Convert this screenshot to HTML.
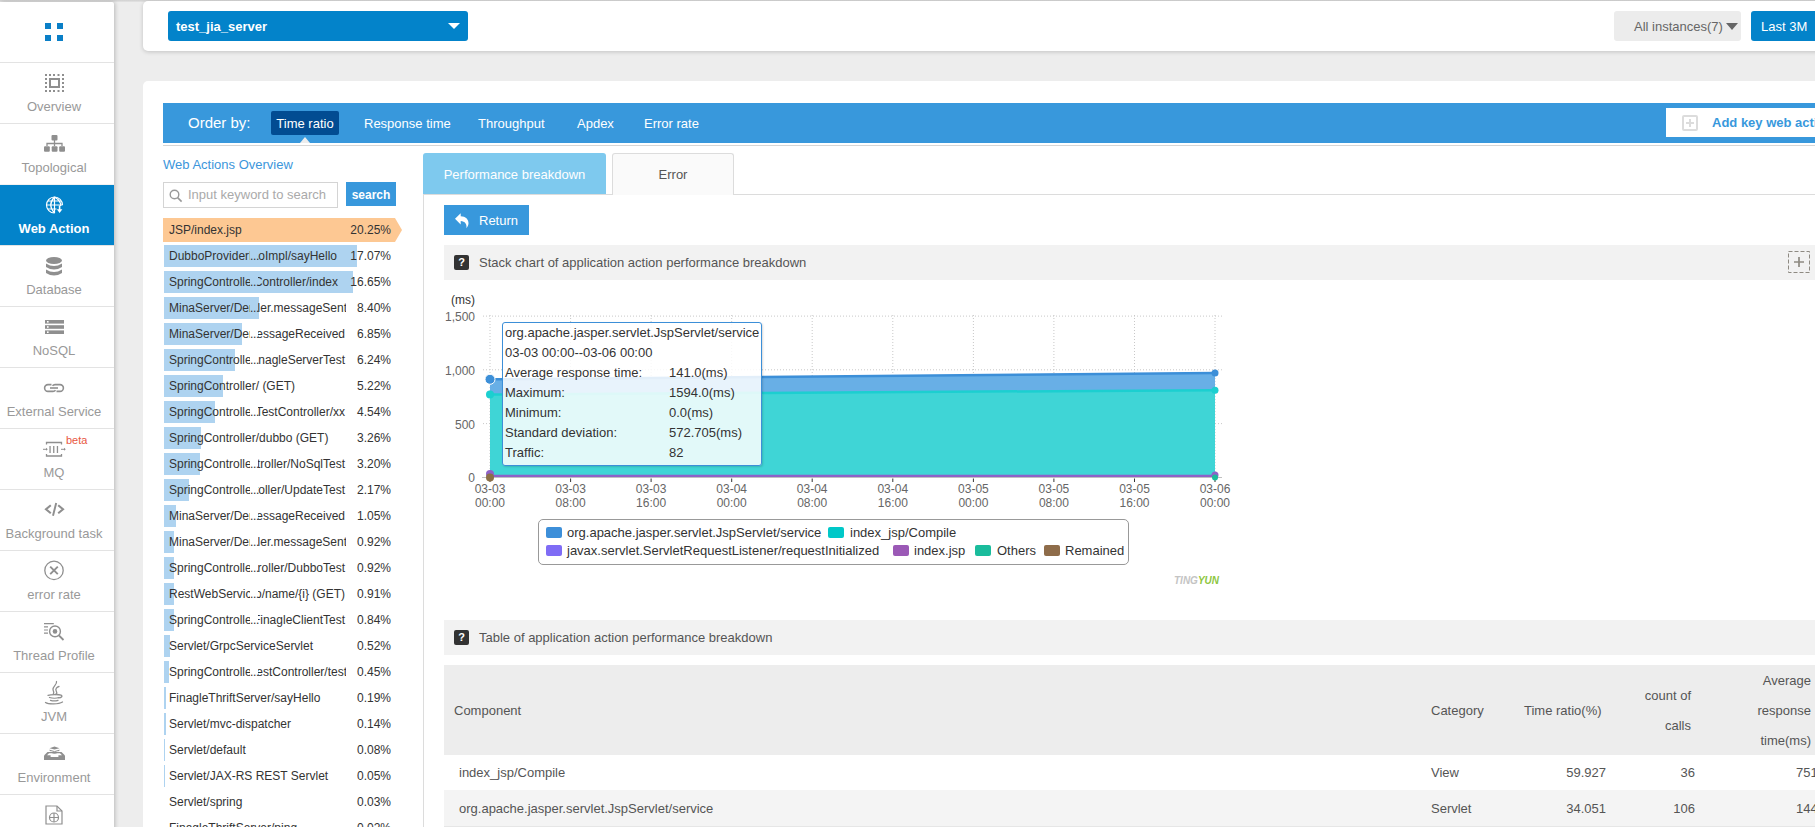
<!DOCTYPE html><html><head><meta charset="utf-8"><style>*{box-sizing:border-box;margin:0;padding:0}
html,body{width:1815px;height:827px;overflow:hidden;background:#ededed;font-family:"Liberation Sans",sans-serif;position:relative}
.abs{position:absolute}
.topshadow{position:absolute;left:0;top:0;width:1815px;height:2px;background:linear-gradient(#cfcfcf,#e4e4e4)}
#side{position:absolute;left:0;top:2px;width:114px;height:830px;background:#fff;box-shadow:1px 0 4px rgba(0,0,0,.22);border-top-right-radius:2px}
.nav{position:absolute;left:0;width:114px;height:61px;border-top:1px solid #e3e3e3;text-align:center;color:#999;font-size:13px}
.nav .lbl{position:absolute;left:0;width:108px;top:36px;line-height:16px;white-space:nowrap}
.nav.act{background:#0383ca;color:#fff;border-top-color:#f2f2f2;font-weight:bold}
#hdr{position:absolute;left:143px;top:1px;width:1690px;height:50px;background:#fff;border-radius:5px;box-shadow:0 1px 4px rgba(0,0,0,.18)}
#sel{position:absolute;left:168px;top:11px;width:300px;height:30px;background:#0383ca;border-radius:3px;color:#fff;font-weight:bold;font-size:13px;line-height:31px;padding-left:8px}
#sel:after{content:"";position:absolute;right:8px;top:12px;border-left:6px solid transparent;border-right:6px solid transparent;border-top:6px solid #fff}
#inst{position:absolute;left:1614px;top:11px;width:127px;height:30px;background:#ececec;border-radius:3px;color:#666;font-size:13px;line-height:31px;padding-left:20px;white-space:nowrap}
#inst:after{content:"";position:absolute;right:3px;top:12px;border-left:6px solid transparent;border-right:6px solid transparent;border-top:7px solid #666}
#last{position:absolute;left:1751px;top:11px;width:80px;height:30px;background:#0383ca;border-radius:3px;color:#fff;font-size:13px;line-height:31px;padding-left:10px;white-space:nowrap}
#main{position:absolute;left:143px;top:81px;width:1700px;height:800px;background:#fff;border-radius:5px}
#order{position:absolute;left:163px;top:103px;width:1660px;height:40px;background:#3898dc}
#orderline{position:absolute;left:163px;top:145px;width:1660px;height:1px;background:#d6d6d6}
.ob{position:absolute;top:104px;height:40px;line-height:40px;color:#fff;font-size:13px;white-space:nowrap}
#tr{position:absolute;left:271px;top:111px;width:68px;height:24px;background:#024c92;border-radius:2px;color:#fff;font-size:13px;line-height:26px;text-align:center}
#tri{position:absolute;left:300px;top:137px;border-left:5px solid transparent;border-right:5px solid transparent;border-bottom:6px solid #ededed}
#addkey{position:absolute;left:1666px;top:108px;width:160px;height:29px;background:#fff;color:#3898dc;font-weight:bold;font-size:13px;line-height:30px;padding-left:46px;white-space:nowrap}
#addicon{position:absolute;left:1682px;top:115px;width:16px;height:16px;border:2px solid #dcdcdc;border-radius:2px}
#addicon:before{content:"";position:absolute;left:5px;top:2px;width:2px;height:8px;background:#dcdcdc}
#addicon:after{content:"";position:absolute;left:2px;top:5px;width:8px;height:2px;background:#dcdcdc}
#srch{position:absolute;left:163px;top:182px;width:175px;height:26px;border:1px solid #d4d4d4;background:#fff}
#srch span{position:absolute;left:24px;top:4px;font-size:13px;line-height:16px;color:#aaa;white-space:nowrap}
#sbtn{position:absolute;left:346px;top:182px;width:50px;height:24px;background:#3898dc;color:#fff;font-size:12px;font-weight:bold;line-height:27px;text-align:center}
.lt{position:absolute;left:169px;font-size:12px;line-height:16px;color:#333;white-space:nowrap}
.tl{position:absolute;left:258px;width:88px;height:16px;overflow:hidden}
.tl span{position:absolute;right:0;top:0;font-size:12px;line-height:16px;color:#333;white-space:nowrap}
.lp{position:absolute;left:330px;width:61px;text-align:right;font-size:12px;line-height:16px;color:#333}
#tab1{position:absolute;left:423px;top:153px;width:183px;height:41px;background:#7ec9ee;border-radius:3px 3px 0 0;color:#fff;font-size:13px;line-height:43px;text-align:center}
#tab2{position:absolute;left:612px;top:153px;width:122px;height:42px;background:#fafafa;border:1px solid #dcdcdc;border-bottom:none;border-radius:3px 3px 0 0;color:#555;font-size:13px;line-height:42px;text-align:center}
#pane{position:absolute;left:423px;top:194px;width:1500px;height:700px;border-left:1px solid #dcdcdc;border-top:1px solid #dcdcdc}
#ret{position:absolute;left:444px;top:205px;width:85px;height:30px;background:#3898dc;color:#fff;font-size:13px;line-height:32px;padding-left:35px}
.tbar{position:absolute;left:444px;width:1400px;height:35px;background:#f2f2f2;color:#555;font-size:13px;line-height:36px;padding-left:35px;white-space:nowrap}
.q{position:absolute;left:10px;top:10px;width:15px;height:15px;background:#333;border-radius:2px;color:#fff;font-size:11px;font-weight:bold;line-height:15px;text-align:center}
.th{position:absolute;color:#555;font-size:13px;line-height:30px;white-space:nowrap}
.td{position:absolute;color:#555;font-size:13px;line-height:18px;white-space:nowrap}
</style></head><body><div class="topshadow"></div>
<div id="side"></div>
<div class="nav" style="top:62px"><div class="lbl">Overview</div></div>
<div class="nav" style="top:123px"><div class="lbl">Topological</div></div>
<div class="nav act" style="top:184px"><div class="lbl">Web Action</div></div>
<div class="nav" style="top:245px"><div class="lbl">Database</div></div>
<div class="nav" style="top:306px"><div class="lbl">NoSQL</div></div>
<div class="nav" style="top:367px"><div class="lbl">External Service</div></div>
<div class="nav" style="top:428px"><div class="lbl">MQ</div></div>
<div class="nav" style="top:489px"><div class="lbl">Background task</div></div>
<div class="nav" style="top:550px"><div class="lbl">error rate</div></div>
<div class="nav" style="top:611px"><div class="lbl">Thread Profile</div></div>
<div class="nav" style="top:672px"><div class="lbl">JVM</div></div>
<div class="nav" style="top:733px"><div class="lbl">Environment</div></div>
<div class="nav" style="top:794px"><div class="lbl"></div></div>
<svg class="abs" style="left:0;top:0" width="120" height="827"><rect x="45" y="23" width="6" height="6" fill="#0a7fc7"/><rect x="45" y="35" width="6" height="6" fill="#0a7fc7"/><rect x="57" y="23" width="6" height="6" fill="#0a7fc7"/><rect x="57" y="35" width="6" height="6" fill="#0a7fc7"/><rect x="45" y="74" width="2" height="2" fill="#8f8f8f"/><rect x="45" y="90" width="2" height="2" fill="#8f8f8f"/><rect x="49" y="74" width="2" height="2" fill="#8f8f8f"/><rect x="49" y="90" width="2" height="2" fill="#8f8f8f"/><rect x="53" y="74" width="2" height="2" fill="#8f8f8f"/><rect x="53" y="90" width="2" height="2" fill="#8f8f8f"/><rect x="57.5" y="74" width="2" height="2" fill="#8f8f8f"/><rect x="57.5" y="90" width="2" height="2" fill="#8f8f8f"/><rect x="62" y="74" width="2" height="2" fill="#8f8f8f"/><rect x="62" y="90" width="2" height="2" fill="#8f8f8f"/><rect x="45" y="78" width="2" height="2" fill="#8f8f8f"/><rect x="62" y="78" width="2" height="2" fill="#8f8f8f"/><rect x="45" y="82" width="2" height="2" fill="#8f8f8f"/><rect x="62" y="82" width="2" height="2" fill="#8f8f8f"/><rect x="45" y="86" width="2" height="2" fill="#8f8f8f"/><rect x="62" y="86" width="2" height="2" fill="#8f8f8f"/><rect x="50" y="79" width="9" height="8" fill="none" stroke="#8f8f8f" stroke-width="2"/><rect x="51.5" y="135" width="6" height="5.5" rx="1" fill="#8f8f8f"/><path d="M54.5 140v6 M47 146v-2.5h15v2.5" fill="none" stroke="#8f8f8f" stroke-width="1.3"/><rect x="44" y="146.2" width="5.8" height="5.6" rx="1" fill="#8f8f8f"/><rect x="51.7" y="146.2" width="5.8" height="5.6" rx="1" fill="#8f8f8f"/><rect x="59.2" y="146.2" width="5.8" height="5.6" rx="1" fill="#8f8f8f"/><g fill="none" stroke="#fff" stroke-width="1.2"><path d="M54.5 213A8 8 0 1 1 62.5 205"/><path d="M54.5 197V213 M48 201H61 M46.5 205H62.5 M47.5 209H56.5 M54.5 197Q47 205 54.5 213 M54.5 197Q61.5 201 60.5 206"/></g><path d="M59.6 205.5V210" stroke="#fff" stroke-width="1.6"/><path d="M56.8 209.2L59.6 213L62.4 209.2z" fill="#fff"/><ellipse cx="54" cy="260.5" rx="8" ry="3.5" fill="#8f8f8f"/><path d="M46 263.5 q8 5 16 0 v3.5 q-8 5 -16 0z" fill="#8f8f8f"/><path d="M46 269.5 q8 5 16 0 v3.5 q-8 5 -16 0z" fill="#8f8f8f"/><rect x="45" y="320" width="19" height="3.6" fill="#8f8f8f"/><rect x="47" y="321" width="1.6" height="1.6" fill="#fff"/><rect x="45" y="325.2" width="19" height="3.6" fill="#8f8f8f"/><rect x="47" y="326.2" width="1.6" height="1.6" fill="#fff"/><rect x="45" y="330.4" width="19" height="3.6" fill="#8f8f8f"/><rect x="47" y="331.4" width="1.6" height="1.6" fill="#fff"/><g fill="none" stroke="#8f8f8f" stroke-width="1.6"><path d="M51.5 384.6h-3.5a3.4 3.4 0 0 0 0 6.8h5a3.4 3.4 0 0 0 2.5-1.2"/><path d="M56.5 391.4h3.5a3.4 3.4 0 0 0 0-6.8h-5a3.4 3.4 0 0 0-2.5 1.2"/><path d="M50 388h8"/></g><g fill="none" stroke="#8f8f8f" stroke-width="1.3"><path d="M46.5 444.5v-2h15v2 M46.5 454v2h15v-2"/></g><rect x="49.4" y="446" width="1.3" height="7" fill="#8f8f8f"/><rect x="53.1" y="446" width="1.3" height="7" fill="#8f8f8f"/><rect x="56.8" y="446" width="1.3" height="7" fill="#8f8f8f"/><path d="M43 449.3h4 M61 449.3h4" stroke="#8f8f8f" stroke-width="1"/><path d="M46 447.8l1.8 1.5-1.8 1.5z M64 447.8l1.8 1.5-1.8 1.5z" fill="#8f8f8f"/><path d="M50.8 505.2L46 509.2L50.8 513.2 M58.2 505.2L63 509.2L58.2 513.2" fill="none" stroke="#8f8f8f" stroke-width="2.1"/><path d="M56.2 503L53 515.8" stroke="#8f8f8f" stroke-width="1.9"/><circle cx="54" cy="570.4" r="9.2" fill="none" stroke="#8f8f8f" stroke-width="1.3"/><path d="M50.2 566.6l7.6 7.6 M57.8 566.6l-7.6 7.6" stroke="#8f8f8f" stroke-width="1.9"/><g stroke="#8f8f8f" fill="none"><path d="M44 623.6h9.8 M44 626.9h4 M44 630h4 M44 633.2h4" stroke-width="1.2"/><circle cx="55" cy="631.4" r="5.4" stroke-width="1.4"/><path d="M59 635.5l4.5 4.5" stroke-width="1.8"/></g><circle cx="55" cy="631.4" r="2.3" fill="#8f8f8f"/><g fill="none" stroke="#8f8f8f" stroke-width="1.3" stroke-linecap="round"><path d="M56.5 681.5c1 3-4 5-3.5 8s1.5 2.5 0.3 4.5"/><path d="M59 686.5c-2 0.5-4 2.2-2.8 4.5s0.5 3 -0.8 3.5"/><path d="M48 695.3c3-1 11-1 13-0.2c2 0.8 0.5 2.6-2.2 2.8"/><path d="M49.5 697.5c2.5 0.8 7.5 0.8 9.5 0"/><path d="M50.5 700.3c2 0.7 5.5 0.7 7.5 0"/><path d="M45.5 702.5c3 2 13 2 17-0.5"/></g><path d="M44 755.5L47.5 752H61.5L65 755.5V760H44z" fill="#8f8f8f"/><path d="M49 753.2H60L62 755.2H58.4V757.1H50.6V755.2H47z" fill="#fff"/><path d="M49.5 748.2L54.5 746.6L59.5 748.2L54.5 749.6z" fill="#8f8f8f"/><path d="M49.5 750.2L54.5 751.6L59.5 750.2" fill="none" stroke="#8f8f8f" stroke-width="1"/><path d="M50.5 752.2L54.5 753.4L58.5 752.2" fill="none" stroke="#8f8f8f" stroke-width="0.9"/><g fill="none" stroke="#8f8f8f" stroke-width="1.2"><path d="M46 806h11l5 5v13h-16z"/><path d="M57 806v5h5"/><circle cx="54" cy="817.5" r="4.5"/><path d="M54 813v9 M49.5 817.5h9"/></g></svg>
<div class="abs" style="left:66px;top:433px;color:#e8573f;font-size:11px;line-height:14px">beta</div>
<div id="hdr"></div>
<div id="sel">test_jia_server</div>
<div id="inst">All instances(7)</div>
<div id="last">Last 3M</div>
<div id="main"></div>
<div id="order"></div>
<div id="orderline"></div>
<div class="ob" style="left:188px;top:103px;font-size:15px">Order by:</div>
<div id="tr">Time ratio</div>
<div id="tri"></div>
<div class="ob" style="left:364px">Response time</div>
<div class="ob" style="left:478px">Throughput</div>
<div class="ob" style="left:577px">Apdex</div>
<div class="ob" style="left:644px">Error rate</div>
<div id="addkey">Add key web action</div>
<div id="addicon"></div>
<div class="abs" style="left:163px;top:157px;color:#3c96db;font-size:13px;line-height:16px;white-space:nowrap">Web Actions Overview</div>
<div id="srch"><svg width="14" height="14" style="position:absolute;left:5px;top:6px"><circle cx="5.5" cy="5.5" r="4.3" fill="none" stroke="#999" stroke-width="1.4"/><path d="M8.6 8.6l4 4" stroke="#999" stroke-width="1.6"/></svg><span>Input keyword to search</span></div>
<div id="sbtn">search</div>
<div class="abs" style="left:163px;top:218px;width:232px;height:24px;background:#fdc893"></div>
<div class="abs" style="left:395px;top:218px;border-top:12px solid transparent;border-bottom:12px solid transparent;border-left:7px solid #fdc893;width:0;height:0"></div>
<div class="lt" style="top:222px">JSP/index.jsp</div>
<div class="lp" style="top:222px">20.25%</div>
<div class="abs" style="left:164px;top:245px;width:193.4px;height:22px;background:#aed3f0"></div>
<div class="lt" style="top:248px;width:81px;overflow:hidden">DubboProviderDemoImpl</div>
<div class="lt" style="top:248px;left:250px;letter-spacing:-0.3px">...</div>
<div class="tl" style="top:248px"><span style="right:9px">DemoImpl/sayHello</span></div>
<div class="lp" style="top:248px">17.07%</div>
<div class="abs" style="left:164px;top:271px;width:188.6px;height:22px;background:#aed3f0"></div>
<div class="lt" style="top:274px;width:81px;overflow:hidden">SpringControllerTestController</div>
<div class="lt" style="top:274px;left:250px;letter-spacing:-0.3px">...</div>
<div class="tl" style="top:274px"><span style="right:8px">TestController/index</span></div>
<div class="lp" style="top:274px">16.65%</div>
<div class="abs" style="left:164px;top:297px;width:95.2px;height:22px;background:#aed3f0"></div>
<div class="lt" style="top:300px;width:81px;overflow:hidden">MinaServer/DemoServerHandler</div>
<div class="lt" style="top:300px;left:250px;letter-spacing:-0.3px">...</div>
<div class="tl" style="top:300px"><span style="right:-1px">Handler.messageSent</span></div>
<div class="lp" style="top:300px">8.40%</div>
<div class="abs" style="left:164px;top:323px;width:77.6px;height:22px;background:#aed3f0"></div>
<div class="lt" style="top:326px;width:81px;overflow:hidden">MinaServer/DemoServerHandler</div>
<div class="lt" style="top:326px;left:250px;letter-spacing:-0.3px">...</div>
<div class="tl" style="top:326px"><span style="right:1px">messageReceived</span></div>
<div class="lp" style="top:326px">6.85%</div>
<div class="abs" style="left:164px;top:349px;width:70.7px;height:22px;background:#aed3f0"></div>
<div class="lt" style="top:352px;width:81px;overflow:hidden">SpringControllerTestController</div>
<div class="lt" style="top:352px;left:250px;letter-spacing:-0.3px">...</div>
<div class="tl" style="top:352px"><span style="right:1px">FinagleServerTest</span></div>
<div class="lp" style="top:352px">6.24%</div>
<div class="abs" style="left:164px;top:375px;width:59.1px;height:22px;background:#aed3f0"></div>
<div class="lt" style="top:378px">SpringController/ (GET)</div>
<div class="lp" style="top:378px">5.22%</div>
<div class="abs" style="left:164px;top:401px;width:51.4px;height:22px;background:#aed3f0"></div>
<div class="lt" style="top:404px;width:81px;overflow:hidden">SpringControllerTestController</div>
<div class="lt" style="top:404px;left:250px;letter-spacing:-0.3px">...</div>
<div class="tl" style="top:404px"><span style="right:1px">TestController/xx</span></div>
<div class="lp" style="top:404px">4.54%</div>
<div class="abs" style="left:164px;top:427px;width:36.9px;height:22px;background:#aed3f0"></div>
<div class="lt" style="top:430px">SpringController/dubbo (GET)</div>
<div class="lp" style="top:430px">3.26%</div>
<div class="abs" style="left:164px;top:453px;width:36.3px;height:22px;background:#aed3f0"></div>
<div class="lt" style="top:456px;width:81px;overflow:hidden">SpringControllerTestController</div>
<div class="lt" style="top:456px;left:250px;letter-spacing:-0.3px">...</div>
<div class="tl" style="top:456px"><span style="right:1px">Controller/NoSqlTest</span></div>
<div class="lp" style="top:456px">3.20%</div>
<div class="abs" style="left:164px;top:479px;width:24.6px;height:22px;background:#aed3f0"></div>
<div class="lt" style="top:482px;width:81px;overflow:hidden">SpringControllerTestController</div>
<div class="lt" style="top:482px;left:250px;letter-spacing:-0.3px">...</div>
<div class="tl" style="top:482px"><span style="right:1px">Controller/UpdateTest</span></div>
<div class="lp" style="top:482px">2.17%</div>
<div class="abs" style="left:164px;top:505px;width:11.9px;height:22px;background:#aed3f0"></div>
<div class="lt" style="top:508px;width:81px;overflow:hidden">MinaServer/DemoServerHandler</div>
<div class="lt" style="top:508px;left:250px;letter-spacing:-0.3px">...</div>
<div class="tl" style="top:508px"><span style="right:1px">messageReceived</span></div>
<div class="lp" style="top:508px">1.05%</div>
<div class="abs" style="left:164px;top:531px;width:10.4px;height:22px;background:#aed3f0"></div>
<div class="lt" style="top:534px;width:81px;overflow:hidden">MinaServer/DemoServerHandler</div>
<div class="lt" style="top:534px;left:250px;letter-spacing:-0.3px">...</div>
<div class="tl" style="top:534px"><span style="right:-1px">Handler.messageSent</span></div>
<div class="lp" style="top:534px">0.92%</div>
<div class="abs" style="left:164px;top:557px;width:10.4px;height:22px;background:#aed3f0"></div>
<div class="lt" style="top:560px;width:81px;overflow:hidden">SpringControllerTestController</div>
<div class="lt" style="top:560px;left:250px;letter-spacing:-0.3px">...</div>
<div class="tl" style="top:560px"><span style="right:1px">Controller/DubboTest</span></div>
<div class="lp" style="top:560px">0.92%</div>
<div class="abs" style="left:164px;top:583px;width:10.3px;height:22px;background:#aed3f0"></div>
<div class="lt" style="top:586px;width:81px;overflow:hidden">RestWebService/hello</div>
<div class="lt" style="top:586px;left:250px;letter-spacing:-0.3px">...</div>
<div class="tl" style="top:586px"><span style="right:1px">hello/name/{i} (GET)</span></div>
<div class="lp" style="top:586px">0.91%</div>
<div class="abs" style="left:164px;top:609px;width:9.5px;height:22px;background:#aed3f0"></div>
<div class="lt" style="top:612px;width:81px;overflow:hidden">SpringControllerTestController</div>
<div class="lt" style="top:612px;left:250px;letter-spacing:-0.3px">...</div>
<div class="tl" style="top:612px"><span style="right:1px">FinagleClientTest</span></div>
<div class="lp" style="top:612px">0.84%</div>
<div class="abs" style="left:164px;top:635px;width:5.9px;height:22px;background:#aed3f0"></div>
<div class="lt" style="top:638px">Servlet/GrpcServiceServlet</div>
<div class="lp" style="top:638px">0.52%</div>
<div class="abs" style="left:164px;top:661px;width:5.1px;height:22px;background:#aed3f0"></div>
<div class="lt" style="top:664px;width:81px;overflow:hidden">SpringControllerTestController</div>
<div class="lt" style="top:664px;left:250px;letter-spacing:-0.3px">...</div>
<div class="tl" style="top:664px"><span style="right:-1px">TestController/test</span></div>
<div class="lp" style="top:664px">0.45%</div>
<div class="abs" style="left:164px;top:687px;width:2.2px;height:22px;background:#aed3f0"></div>
<div class="lt" style="top:690px">FinagleThriftServer/sayHello</div>
<div class="lp" style="top:690px">0.19%</div>
<div class="abs" style="left:164px;top:713px;width:1.6px;height:22px;background:#aed3f0"></div>
<div class="lt" style="top:716px">Servlet/mvc-dispatcher</div>
<div class="lp" style="top:716px">0.14%</div>
<div class="abs" style="left:164px;top:739px;width:0.9px;height:22px;background:#aed3f0"></div>
<div class="lt" style="top:742px">Servlet/default</div>
<div class="lp" style="top:742px">0.08%</div>
<div class="abs" style="left:164px;top:765px;width:0.6px;height:22px;background:#aed3f0"></div>
<div class="lt" style="top:768px">Servlet/JAX-RS REST Servlet</div>
<div class="lp" style="top:768px">0.05%</div>
<div class="lt" style="top:794px">Servlet/spring</div>
<div class="lp" style="top:794px">0.03%</div>
<div class="lt" style="top:820px">FinagleThriftServer/ping</div>
<div class="lp" style="top:820px">0.02%</div>
<div id="pane"></div>
<div id="tab1">Performance breakdown</div>
<div id="tab2">Error</div>
<div id="ret"><svg width="16" height="18" style="position:absolute;left:11px;top:7px"><path d="M0 6.7L5.7 1.2V4.3C10.5 4.3 13.8 7.5 13.5 11.5C13.3 13.5 12.3 15 11.4 16.2C12.2 12.2 10 9.2 5.7 9V12.5Z" fill="#fff"/></svg>Return</div>
<div class="tbar" style="top:245px"><div class="q">?</div>Stack chart of application action performance breakdown</div>
<svg class="abs" style="left:1787px;top:250px" width="24" height="24"><rect x="1.5" y="1.5" width="21" height="21" fill="none" stroke="#8e8a82" stroke-width="1" stroke-dasharray="4 2"/><path d="M12 7V17 M7 12H17" stroke="#8e8a82" stroke-width="1.7"/></svg>
<div class="tbar" style="top:620px"><div class="q">?</div>Table of application action performance breakdown</div>
<svg class="abs" style="left:0;top:0" width="1815" height="827"><path d="M483 423.6H1222" stroke="#c8c8c8" stroke-width="1" stroke-dasharray="1 2"/><path d="M483 369.8H1222" stroke="#c8c8c8" stroke-width="1" stroke-dasharray="1 2"/><path d="M483 316.1H1222" stroke="#c8c8c8" stroke-width="1" stroke-dasharray="1 2"/><path d="M490.0 315V477" stroke="#c8c8c8" stroke-width="1" stroke-dasharray="1 2"/><path d="M570.6 315V477" stroke="#c8c8c8" stroke-width="1" stroke-dasharray="1 2"/><path d="M651.1 315V477" stroke="#c8c8c8" stroke-width="1" stroke-dasharray="1 2"/><path d="M731.7 315V477" stroke="#c8c8c8" stroke-width="1" stroke-dasharray="1 2"/><path d="M812.2 315V477" stroke="#c8c8c8" stroke-width="1" stroke-dasharray="1 2"/><path d="M892.8 315V477" stroke="#c8c8c8" stroke-width="1" stroke-dasharray="1 2"/><path d="M973.4 315V477" stroke="#c8c8c8" stroke-width="1" stroke-dasharray="1 2"/><path d="M1053.9 315V477" stroke="#c8c8c8" stroke-width="1" stroke-dasharray="1 2"/><path d="M1134.5 315V477" stroke="#c8c8c8" stroke-width="1" stroke-dasharray="1 2"/><path d="M1215.0 315V477" stroke="#c8c8c8" stroke-width="1" stroke-dasharray="1 2"/><path d="M490.0 379.3L1215.0 373.0L1215.0 390.2L490.0 394.5z" fill="#68afe6"/><path d="M490.0 394.5L1215.0 390.2L1215.0 476.2L490.0 476.2z" fill="#3fd5d6"/><path d="M490.0 379.3L1215.0 373.0" stroke="#3c8fd8" stroke-width="2.5" fill="none"/><path d="M490.0 394.5L1215.0 390.2" stroke="#1ccfd0" stroke-width="2.5" fill="none"/><path d="M490.0 476H1215.0" stroke="#8e62c8" stroke-width="2.5"/><path d="M482 477.5H1222" stroke="#c0c0c0" stroke-width="1"/><path d="M490.0 478.5V482" stroke="#333" stroke-width="1"/><path d="M570.6 478.5V482" stroke="#333" stroke-width="1"/><path d="M651.1 478.5V482" stroke="#333" stroke-width="1"/><path d="M731.7 478.5V482" stroke="#333" stroke-width="1"/><path d="M812.2 478.5V482" stroke="#333" stroke-width="1"/><path d="M892.8 478.5V482" stroke="#333" stroke-width="1"/><path d="M973.4 478.5V482" stroke="#333" stroke-width="1"/><path d="M1053.9 478.5V482" stroke="#333" stroke-width="1"/><path d="M1134.5 478.5V482" stroke="#333" stroke-width="1"/><path d="M1215.0 478.5V482" stroke="#333" stroke-width="1"/><circle cx="490.0" cy="379.3" r="5" fill="#3c8fd8" stroke="#fff" stroke-width="1"/><circle cx="490.0" cy="394.5" r="4" fill="#1ccfd0"/><circle cx="490.0" cy="474" r="4" fill="#8e62c8"/><circle cx="490.0" cy="477.5" r="4" fill="#8b6f47"/><circle cx="1215.0" cy="373.0" r="3.5" fill="#3c8fd8"/><circle cx="1215.0" cy="390.2" r="3.5" fill="#1ccfd0"/><circle cx="1215.0" cy="475" r="3.5" fill="#8e62c8"/><circle cx="1215.0" cy="477.5" r="3" fill="#1abc9c"/></svg>
<div class="abs" style="left:451px;top:293px;font-size:12px;line-height:15px;color:#333">(ms)</div>
<div class="abs" style="left:424px;width:51px;text-align:right;top:310px;font-size:12px;line-height:15px;color:#666">1,500</div>
<div class="abs" style="left:424px;width:51px;text-align:right;top:364px;font-size:12px;line-height:15px;color:#666">1,000</div>
<div class="abs" style="left:424px;width:51px;text-align:right;top:418px;font-size:12px;line-height:15px;color:#666">500</div>
<div class="abs" style="left:424px;width:51px;text-align:right;top:471px;font-size:12px;line-height:15px;color:#666">0</div>
<div class="abs" style="left:460.0px;width:60px;text-align:center;top:482px;font-size:12px;line-height:14px;color:#666">03-03<br>00:00</div>
<div class="abs" style="left:540.6px;width:60px;text-align:center;top:482px;font-size:12px;line-height:14px;color:#666">03-03<br>08:00</div>
<div class="abs" style="left:621.1px;width:60px;text-align:center;top:482px;font-size:12px;line-height:14px;color:#666">03-03<br>16:00</div>
<div class="abs" style="left:701.7px;width:60px;text-align:center;top:482px;font-size:12px;line-height:14px;color:#666">03-04<br>00:00</div>
<div class="abs" style="left:782.2px;width:60px;text-align:center;top:482px;font-size:12px;line-height:14px;color:#666">03-04<br>08:00</div>
<div class="abs" style="left:862.8px;width:60px;text-align:center;top:482px;font-size:12px;line-height:14px;color:#666">03-04<br>16:00</div>
<div class="abs" style="left:943.4px;width:60px;text-align:center;top:482px;font-size:12px;line-height:14px;color:#666">03-05<br>00:00</div>
<div class="abs" style="left:1023.9px;width:60px;text-align:center;top:482px;font-size:12px;line-height:14px;color:#666">03-05<br>08:00</div>
<div class="abs" style="left:1104.5px;width:60px;text-align:center;top:482px;font-size:12px;line-height:14px;color:#666">03-05<br>16:00</div>
<div class="abs" style="left:1185.0px;width:60px;text-align:center;top:482px;font-size:12px;line-height:14px;color:#666">03-06<br>00:00</div>
<div class="abs" style="left:502px;top:322px;width:260px;height:144px;border:1px solid #3c8fd8;border-radius:3px;background:rgba(255,255,255,.85);box-shadow:1px 1px 2px rgba(0,0,0,.15)"></div>
<div class="abs" style="left:505px;top:325px;font-size:13px;line-height:16px;color:#333;white-space:nowrap">org.apache.jasper.servlet.JspServlet/service</div>
<div class="abs" style="left:505px;top:345px;font-size:13px;line-height:16px;color:#333;white-space:nowrap">03-03 00:00--03-06 00:00</div>
<div class="abs" style="left:505px;top:365px;font-size:13px;line-height:16px;color:#333;white-space:nowrap">Average response time:</div>
<div class="abs" style="left:669px;top:365px;font-size:13px;line-height:16px;color:#333;white-space:nowrap">141.0(ms)</div>
<div class="abs" style="left:505px;top:385px;font-size:13px;line-height:16px;color:#333;white-space:nowrap">Maximum:</div>
<div class="abs" style="left:669px;top:385px;font-size:13px;line-height:16px;color:#333;white-space:nowrap">1594.0(ms)</div>
<div class="abs" style="left:505px;top:405px;font-size:13px;line-height:16px;color:#333;white-space:nowrap">Minimum:</div>
<div class="abs" style="left:669px;top:405px;font-size:13px;line-height:16px;color:#333;white-space:nowrap">0.0(ms)</div>
<div class="abs" style="left:505px;top:425px;font-size:13px;line-height:16px;color:#333;white-space:nowrap">Standard deviation:</div>
<div class="abs" style="left:669px;top:425px;font-size:13px;line-height:16px;color:#333;white-space:nowrap">572.705(ms)</div>
<div class="abs" style="left:505px;top:445px;font-size:13px;line-height:16px;color:#333;white-space:nowrap">Traffic:</div>
<div class="abs" style="left:669px;top:445px;font-size:13px;line-height:16px;color:#333;white-space:nowrap">82</div>
<div class="abs" style="left:538px;top:519px;width:591px;height:46px;border:1px solid #999;border-radius:5px"></div>
<div class="abs" style="left:546px;top:527px;width:16px;height:11px;border-radius:2px;background:#3d8fd9"></div>
<div class="abs" style="left:567px;top:525px;font-size:13px;line-height:16px;color:#333;white-space:nowrap">org.apache.jasper.servlet.JspServlet/service</div>
<div class="abs" style="left:828px;top:527px;width:16px;height:11px;border-radius:2px;background:#00c8c8"></div>
<div class="abs" style="left:850px;top:525px;font-size:13px;line-height:16px;color:#333;white-space:nowrap">index_jsp/Compile</div>
<div class="abs" style="left:546px;top:545px;width:16px;height:11px;border-radius:2px;background:#7f6cf5"></div>
<div class="abs" style="left:567px;top:543px;font-size:13px;line-height:16px;color:#333;white-space:nowrap">javax.servlet.ServletRequestListener/requestInitialized</div>
<div class="abs" style="left:893px;top:545px;width:16px;height:11px;border-radius:2px;background:#9b59b6"></div>
<div class="abs" style="left:914px;top:543px;font-size:13px;line-height:16px;color:#333;white-space:nowrap">index.jsp</div>
<div class="abs" style="left:975px;top:545px;width:16px;height:11px;border-radius:2px;background:#1abc9c"></div>
<div class="abs" style="left:997px;top:543px;font-size:13px;line-height:16px;color:#333;white-space:nowrap">Others</div>
<div class="abs" style="left:1044px;top:545px;width:16px;height:11px;border-radius:2px;background:#8e6c4a"></div>
<div class="abs" style="left:1065px;top:543px;font-size:13px;line-height:16px;color:#333;white-space:nowrap">Remained</div>
<div class="abs" style="left:1174px;top:574px;font-size:10px;line-height:13px;font-weight:bold;font-style:italic;color:#c4c4c4;white-space:nowrap">TING<span style="color:#8dc63f">YUN</span></div>
<div class="abs" style="left:444px;top:665px;width:1400px;height:90px;background:#ededed"></div>
<div class="abs" style="left:444px;top:790px;width:1400px;height:36px;background:#f4f4f4"></div>
<div class="abs" style="left:444px;top:826px;width:1400px;height:1px;background:#e6e6e6"></div>
<div class="th" style="left:454px;top:696px">Component</div>
<div class="th" style="left:1431px;top:696px">Category</div>
<div class="th" style="left:1524px;top:696px">Time ratio(%)</div>
<div class="th" style="left:1600px;width:91px;text-align:right;top:681px">count of<br>calls</div>
<div class="th" style="left:1700px;width:111px;text-align:right;top:666px">Average<br>response<br>time(ms)</div>
<div class="td" style="left:459px;top:764px">index_jsp/Compile</div>
<div class="td" style="left:1431px;top:764px">View</div>
<div class="td" style="left:1500px;width:106px;text-align:right;top:764px">59.927</div>
<div class="td" style="left:1600px;width:95px;text-align:right;top:764px">36</div>
<div class="td" style="left:1796px;top:764px">751.8</div>
<div class="td" style="left:459px;top:800px">org.apache.jasper.servlet.JspServlet/service</div>
<div class="td" style="left:1431px;top:800px">Servlet</div>
<div class="td" style="left:1500px;width:106px;text-align:right;top:800px">34.051</div>
<div class="td" style="left:1600px;width:95px;text-align:right;top:800px">106</div>
<div class="td" style="left:1796px;top:800px">144.2</div></body></html>
